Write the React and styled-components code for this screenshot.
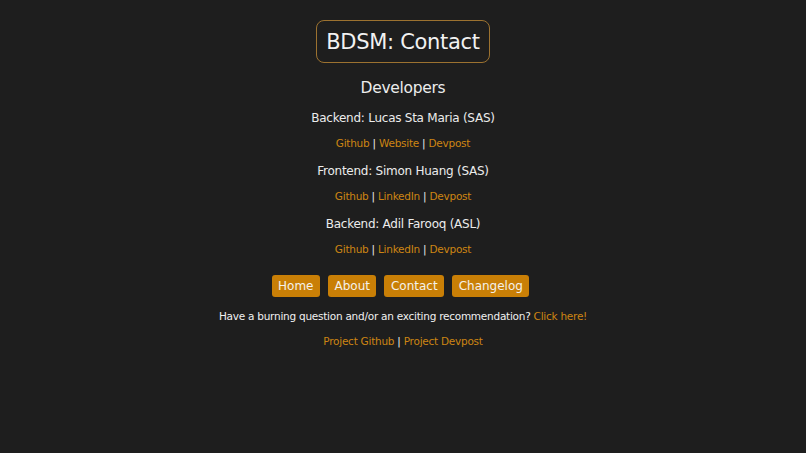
import React from "react";
import styled, { createGlobalStyle } from "styled-components";

const Global = createGlobalStyle`
  html, body { margin: 0; padding: 0; background: #1e1e1e; }
  body { font-family: "DejaVu Sans", "Liberation Sans", sans-serif; color: #ececec; }
  a { color: #cd8513; text-decoration: none; }
`;

const Page = styled.div`
  min-height: 453px;
  display: flex;
  flex-direction: column;
  align-items: center;
  padding-top: 20px;
  box-sizing: border-box;
`;

const TitleBox = styled.h1`
  margin: 0;
  box-sizing: border-box;
  height: 43px;
  padding: 0 9px;
  display: flex;
  align-items: center;
  border: 1px solid #9c7230;
  border-radius: 8px;
  font-size: 21px;
  letter-spacing: -0.3px;
  font-weight: 400;
  color: #f2f2f2;
`;

const Heading = styled.h2`
  margin: 12px 0 0;
  font-size: 15.5px;
  letter-spacing: -0.3px;
  line-height: 26px;
  font-weight: 500;
  color: #ececec;
`;

const Devs = styled.div`
  display: flex;
  flex-direction: column;
  align-items: center;
  margin-top: 3px;
`;

const Name = styled.div`
  font-size: 12px;
  letter-spacing: -0.25px;
  line-height: 26.4px;
  padding-top: 1px;
  margin-bottom: -1px;
  font-weight: 500;
  color: #ececec;
`;

const LinkRow = styled.div`
  font-size: 10.5px;
  letter-spacing: -0.25px;
  line-height: 26.4px;
  color: #ececec;
`;

const Nav = styled.nav`
  display: flex;
  gap: 8px;
  margin-top: 13px;
  padding-right: 5px;
`;

const NavButton = styled.a`
  display: flex;
  align-items: center;
  height: 22px;
  padding: 0 6.5px;
  background: #c97f06;
  border-radius: 3px;
  color: #f4f1ea;
  font-size: 12px;
`;

const Question = styled.p`
  margin: 9px 0 0;
  font-size: 10.5px;
  letter-spacing: -0.25px;
  line-height: 20px;
  color: #f0f0f0;
`;

const Footer = styled.p`
  margin: 5px 0 0;
  font-size: 10.5px;
  letter-spacing: -0.25px;
  line-height: 20px;
  color: #ececec;
`;

const devs = [
  { name: "Backend: Lucas Sta Maria (SAS)", links: ["Github", "Website", "Devpost"] },
  { name: "Frontend: Simon Huang (SAS)", links: ["Github", "LinkedIn", "Devpost"] },
  { name: "Backend: Adil Farooq (ASL)", links: ["Github", "LinkedIn", "Devpost"] },
];

function Links({ items }) {
  return items.map((l, i) => (
    <React.Fragment key={l}>
      {i > 0 && " | "}
      <a href="#">{l}</a>
    </React.Fragment>
  ));
}

export default function App() {
  return (
    <>
      <Global />
      <Page>
        <TitleBox>BDSM: Contact</TitleBox>
        <Heading>Developers</Heading>
        <Devs>
          {devs.map((d) => (
            <React.Fragment key={d.name}>
              <Name>{d.name}</Name>
              <LinkRow>
                <Links items={d.links} />
              </LinkRow>
            </React.Fragment>
          ))}
        </Devs>
        <Nav>
          {["Home", "About", "Contact", "Changelog"].map((b) => (
            <NavButton key={b} href="#">{b}</NavButton>
          ))}
        </Nav>
        <Question>
          Have a burning question and/or an exciting recommendation? <a href="#">Click here!</a>
        </Question>
        <Footer>
          <Links items={["Project Github", "Project Devpost"]} />
        </Footer>
      </Page>
    </>
  );
}
